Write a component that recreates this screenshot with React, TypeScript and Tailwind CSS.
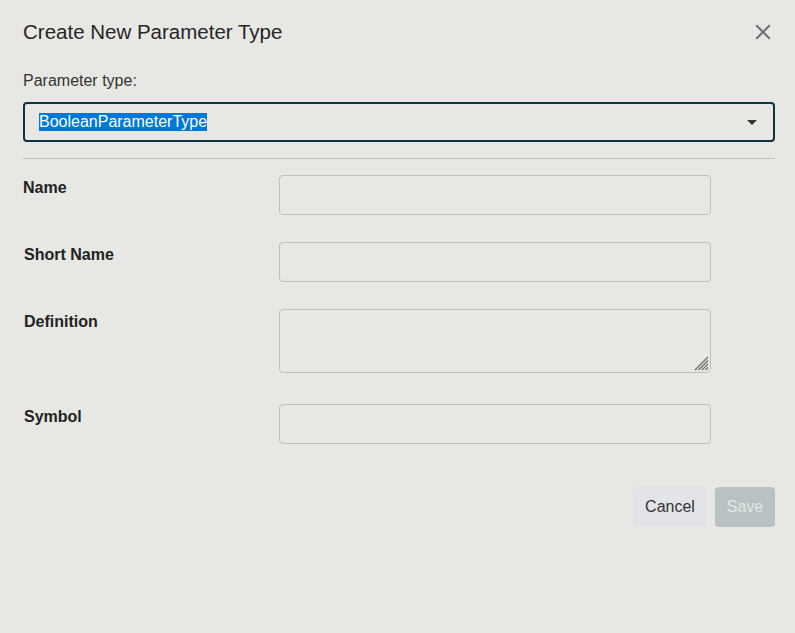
import React from "react";

export default function App() {
  const inputCls =
    "block w-[432px] h-[40px] rounded-[4px] border border-[#bfbfbf] bg-transparent outline-none";
  return (
    <div
      className="min-h-[633px] w-full bg-[#e7e7e3] text-[#222] pl-[23px] pr-[20px] pt-[18px]"
      style={{ fontFamily: '"Liberation Sans", Arial, sans-serif' }}
    >
      <div className="flex items-center justify-between h-[28px]">
        <h1 className="text-[20.5px] leading-[28px] font-normal text-[#262626]">
          Create New Parameter Type
        </h1>
        <button className="mr-[4px] text-[#6b7075]">
          <svg width="16" height="16" viewBox="0 0 16 16" fill="none">
            <path
              d="M2 2L14 14M14 2L2 14"
              stroke="currentColor"
              strokeWidth="2"
              strokeLinecap="square"
            />
          </svg>
        </button>
      </div>

      <div className="mt-[23px] text-[16px] leading-[24px] text-[#333]">Parameter type:</div>

      <div className="mt-[9px] h-[40px] w-full rounded-[4px] border-2 border-[#0d3445] flex items-center justify-between pl-[14px] pr-[16px]">
        <span className="text-[16px] leading-[18px] bg-[#0078d7] text-white">
          BooleanParameterType
        </span>
        <svg width="10" height="5" viewBox="0 0 10 5">
          <path d="M0 0H10L5 5Z" fill="#333" />
        </svg>
      </div>

      <div className="mt-[16px] border-t border-[#bdbdbd]" />

      <div className="mt-[16px] flex flex-col">
        <div className="flex">
          <div className="w-[256px] text-[16px] leading-[26px] font-bold">Name</div>
          <input className={inputCls} />
        </div>
        <div className="flex mt-[27px]">
          <div className="w-[256px] pl-[1px] text-[16px] leading-[26px] font-bold">Short Name</div>
          <input className={inputCls} />
        </div>
        <div className="flex mt-[27px]">
          <div className="w-[256px] pl-[1px] text-[16px] leading-[26px] font-bold">Definition</div>
          <div className="relative">
            <textarea className="block w-[432px] h-[64px] rounded-[4px] border border-[#bfbfbf] bg-transparent outline-none resize-none" />
            <svg
              className="absolute right-[2px] bottom-[2px]"
              width="15"
              height="15"
              viewBox="0 0 15 15"
            >
              <path
                d="M14 1L1 14M14 4.5L4.5 14M14 8L8 14M14 11.5L11.5 14"
                stroke="#6e6e6e"
                strokeWidth="1.3"
              />
            </svg>
          </div>
        </div>
        <div className="flex mt-[31px]">
          <div className="w-[256px] pl-[1px] text-[16px] leading-[26px] font-bold">Symbol</div>
          <input className={inputCls} />
        </div>
      </div>

      <div className="mt-[43px] flex justify-end gap-[8px]">
        <button className="h-[40px] w-[74px] rounded-[4px] bg-[#e2e4e8] text-[16px] text-[#333]">
          Cancel
        </button>
        <button className="h-[40px] w-[60px] rounded-[4px] bg-[#b9c2c2] text-[16px] text-[#e3e7e7]">
          Save
        </button>
      </div>
    </div>
  );
}
